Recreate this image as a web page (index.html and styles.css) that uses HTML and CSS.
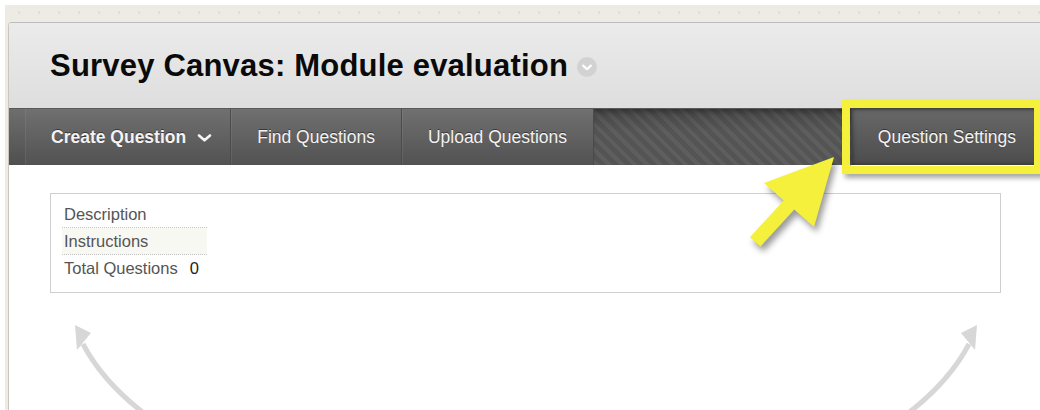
FILE: index.html
```html
<!DOCTYPE html>
<html lang="en">
<head>
<meta charset="utf-8">
<title>Survey Canvas: Module evaluation</title>
<link rel="stylesheet" href="styles.css">
</head>
<body>
<div class="frame">
  <div class="panel">
    <header class="page-head">
      <h1 class="page-title">Survey Canvas: Module evaluation</h1>
      <span class="title-menu">
        <svg viewBox="0 0 20 20" width="20" height="20" aria-hidden="true"><path d="M6.2 8.6 L10 12.2 L13.8 8.6" fill="none" stroke="#fff" stroke-width="2.2" stroke-linecap="round" stroke-linejoin="round"/></svg>
      </span>
    </header>
    <nav class="action-bar">
      <a class="action action-primary">Create Question
        <svg class="caret" viewBox="0 0 15 8" width="15" height="8" aria-hidden="true"><path d="M2 1.5 L7.5 6.3 L13 1.5" fill="none" stroke="#f4f4f4" stroke-width="2.6" stroke-linecap="round" stroke-linejoin="round"/></svg>
      </a>
      <a class="action">Find Questions</a>
      <a class="action">Upload Questions</a>
      <span class="action-fill"></span>
      <a class="action action-end">Question Settings</a>
    </nav>
    <main class="content">
      <div class="summary">
        <div class="summary-row"><span class="summary-label">Description</span></div>
        <div class="summary-row summary-row-alt"><span class="summary-label">Instructions</span></div>
        <div class="summary-row summary-row-last"><span class="summary-label">Total Questions</span><span class="summary-value">0</span></div>
      </div>
    </main>
  </div>
</div>

<!-- highlight frame around the settings button -->
<div class="callout-box"></div>

<!-- pointer and swoosh arrows drawn over the page -->
<svg class="annotations" viewBox="0 0 1040 410" width="1040" height="410" aria-hidden="true">
  <g class="swoosh">
    <path d="M145 414 Q103 382 83 344" fill="none" stroke="#d7d7d7" stroke-width="5"/>
    <polygon points="75,325 91,333 77,350" fill="#d7d7d7"/>
    <path d="M907 414 Q949 382 969 344" fill="none" stroke="#d7d7d7" stroke-width="5"/>
    <polygon points="977,325 961,333 975,350" fill="#d7d7d7"/>
  </g>
  <polygon class="pointer" points="834,157 764,183 783.7,200.4 749.9,237.3 760.5,246.5 794.3,209.6 814,227" fill="#f4f03c"/>
</svg>
</body>
</html>
```

FILE: styles.css
```css
html, body {
  margin: 0;
  padding: 0;
}

body {
  width: 1040px;
  height: 410px;
  overflow: hidden;
  background: #ffffff;
  font-family: "Liberation Sans", Arial, sans-serif;
  position: relative;
}

/* beige outer frame with a faint dotted texture */
.frame {
  margin: 5px 0 0 5px;
  padding: 17px 0 0 3px;
  height: 405px;
  box-sizing: border-box;
  width: 1040px;
  background-color: #eeebe4;
  background-image: radial-gradient(circle, #dfdbd2 0.9px, rgba(0,0,0,0) 1.4px);
  background-size: 20px 13px;
  background-position: 4px 1px;
}

.panel {
  width: 1034px;
  height: 100%;
  box-sizing: border-box;
  background: #ffffff;
  border-left: 1px solid #c9c5bd;
  border-top: 1px solid #bcbcbc;
  border-top-left-radius: 4px;
  display: flex;
  flex-direction: column;
}

/* title strip */
.page-head {
  height: 85px;
  flex: none;
  display: flex;
  align-items: center;
  padding-left: 41px;
  background: linear-gradient(#ebebeb, #dedede);
  border-top-left-radius: 3px;
}

.page-title {
  margin: 0;
  font-size: 31px;
  font-weight: bold;
  color: #0a0a0a;
  line-height: 1;
  letter-spacing: 0.2px;
}

.title-menu {
  width: 20px;
  height: 20px;
  margin: 3px 0 0 9px;
  border-radius: 50%;
  background: #d2d2d2;
  display: flex;
}

/* dark action bar */
.action-bar {
  height: 57px;
  flex: none;
  display: flex;
  padding-left: 16px;
  box-sizing: border-box;
  background: linear-gradient(#6e6e6e, #4f4f4f);
  border-top: 1px solid #595959;
}

.action {
  display: flex;
  align-items: center;
  padding: 0 26px;
  font-size: 17.5px;
  color: #f3f3f3;
  text-shadow: 0 -1px 0 rgba(0, 0, 0, 0.45);
  background: linear-gradient(#707070, #525252);
  border-right: 1px solid #4b4b4b;
  box-shadow: inset 1px 0 0 rgba(255, 255, 255, 0.07);
  white-space: nowrap;
}

.action-primary {
  font-weight: bold;
  padding-right: 18px;
}

.caret {
  margin-left: 11px;
  margin-top: 2px;
}

.action-fill {
  flex: 1;
  background-color: #575757;
  background-image:
    linear-gradient(rgba(0, 0, 0, 0.18), rgba(0, 0, 0, 0) 40%),
    repeating-linear-gradient(45deg, #5e5e5e 0, #5e5e5e 4px, #545454 4px, #545454 9px);
  box-shadow: inset 0 6px 6px -4px rgba(0, 0, 0, 0.35);
}

.action-end {
  border-right: none;
  border-left: 1px solid #4a4a4a;
  background: linear-gradient(#686868, #4c4c4c);
  box-shadow: inset 0 0 5px rgba(0, 0, 0, 0.45);
}

/* survey summary */
.content {
  padding: 28px 41px 0;
}

.summary {
  border: 1px solid #cfcfcf;
  padding: 7px 11px 11px;
}

.summary-row {
  width: 143px;
  height: 26px;
  display: flex;
  align-items: center;
  padding-left: 2px;
  box-sizing: content-box;
  border-bottom: 1px dotted #c4c4c4;
  font-size: 16.5px;
  color: #555555;
  white-space: nowrap;
}

.summary-row-alt {
  background: #f8f8f3;
}

.summary-row-last {
  border-bottom: none;
}

.summary-value {
  margin-left: 12px;
  color: #222222;
}

/* overlays */
.callout-box {
  position: absolute;
  left: 842px;
  top: 100px;
  width: 200px;
  height: 74px;
  box-sizing: border-box;
  border: 8px solid #f4f03c;
  box-shadow: 3px 4px 5px rgba(0, 0, 0, 0.35), inset 1px 1px 2px rgba(0, 0, 0, 0.3);
}

.annotations {
  position: absolute;
  left: 0;
  top: 0;
  pointer-events: none;
}

.pointer {
  filter: drop-shadow(3px 5px 3px rgba(0, 0, 0, 0.4));
}
```
